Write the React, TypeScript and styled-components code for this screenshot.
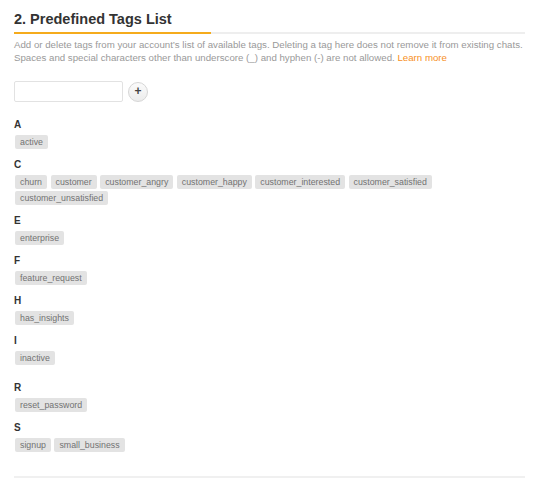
import React from "react";
import styled, { createGlobalStyle } from "styled-components";

const Global = createGlobalStyle`
  html, body { margin: 0; padding: 0; background: #fff; }
  body { font-family: "Liberation Sans", Arial, Helvetica, sans-serif; -webkit-font-smoothing: antialiased; }
  * { box-sizing: border-box; }
`;

const Page = styled.div`
  padding: 10px 14px 0 14px;
`;

const TitleBar = styled.div`
  position: relative;
  padding-bottom: 4px;
  border-bottom: 2px solid #eeeeee;
  &::after {
    content: "";
    position: absolute;
    left: 0;
    bottom: -2px;
    width: 197px;
    height: 2px;
    background: #f5ab1c;
  }
`;

const Title = styled.h2`
  margin: 0;
  font-size: 14.5px;
  line-height: 18px;
  font-weight: bold;
  color: #333;
`;

const Description = styled.p`
  margin: 4px 0 0 0;
  font-size: 9.7px;
  line-height: 13px;
  color: #999;
`;

const DescLine = styled.span`
  display: block;
  white-space: nowrap;
`;

const Link = styled.a`
  color: #f7901e;
  text-decoration: none;
`;

const AddRow = styled.div`
  display: flex;
  align-items: center;
  gap: 5px;
  margin-top: 17px;
`;

const TagInput = styled.input`
  width: 109px;
  height: 21px;
  border: 1px solid #e2e2e2;
  border-radius: 2px;
  padding: 0 4px;
  font-size: 10px;
  outline: none;
  background: #fff;
`;

const PlusButton = styled.button`
  width: 20px;
  height: 20px;
  border-radius: 50%;
  border: 1px solid #d6d6d6;
  background: linear-gradient(#fbfbfb, #ececec);
  color: #444;
  font-family: "Liberation Sans", Arial, sans-serif;
  font-size: 12px;
  font-weight: bold;
  line-height: 1;
  padding: 0 0 1px 0;
  display: flex;
  align-items: center;
  justify-content: center;
  cursor: pointer;
`;

const Groups = styled.div`
  margin-top: 16px;
`;

const Group = styled.section<{ $extra?: number }>`
  margin-bottom: ${(p) => 9 + (p.$extra ?? 0)}px;
`;

const Letter = styled.h3`
  margin: 0 0 4px 0;
  font-size: 10px;
  line-height: 13px;
  font-weight: bold;
  color: #333;
`;

const TagList = styled.div`
  display: flex;
  flex-wrap: wrap;
  gap: 2px 3.5px;
  padding-left: 1px;
`;

const Tag = styled.span`
  display: inline-block;
  height: 14px;
  line-height: 14px;
  padding: 0 5px;
  background: #e3e3e3;
  border-radius: 2px;
  font-size: 8.8px;
  color: #727272;
  white-space: nowrap;
`;

const Footer = styled.div`
  margin-top: 24px;
  border-top: 2px solid #f0f0f0;
`;

const groups: { letter: string; tags: string[]; extra?: number }[] = [
  { letter: "A", tags: ["active"] },
  {
    letter: "C",
    tags: [
      "churn",
      "customer",
      "customer_angry",
      "customer_happy",
      "customer_interested",
      "customer_satisfied",
      "customer_unsatisfied",
    ],
  },
  { letter: "E", tags: ["enterprise"] },
  { letter: "F", tags: ["feature_request"] },
  { letter: "H", tags: ["has_insights"] },
  { letter: "I", tags: ["inactive"], extra: 7 },
  { letter: "R", tags: ["reset_password"] },
  { letter: "S", tags: ["signup", "small_business"] },
];

export default function App() {
  return (
    <Page>
      <Global />
      <TitleBar>
        <Title>2. Predefined Tags List</Title>
      </TitleBar>
      <Description>
        <DescLine>
          Add or delete tags from your account’s list of available tags. Deleting a tag here does not remove it from existing chats.
        </DescLine>
        <DescLine>
          Spaces and special characters other than underscore (_) and hyphen (-) are not allowed. <Link href="#">Learn more</Link>
        </DescLine>
      </Description>
      <AddRow>
        <TagInput type="text" />
        <PlusButton type="button">+</PlusButton>
      </AddRow>
      <Groups>
        {groups.map((g) => (
          <Group key={g.letter} $extra={g.extra}>
            <Letter>{g.letter}</Letter>
            <TagList>
              {g.tags.map((t) => (
                <Tag key={t}>{t}</Tag>
              ))}
            </TagList>
          </Group>
        ))}
      </Groups>
      <Footer />
    </Page>
  );
}
